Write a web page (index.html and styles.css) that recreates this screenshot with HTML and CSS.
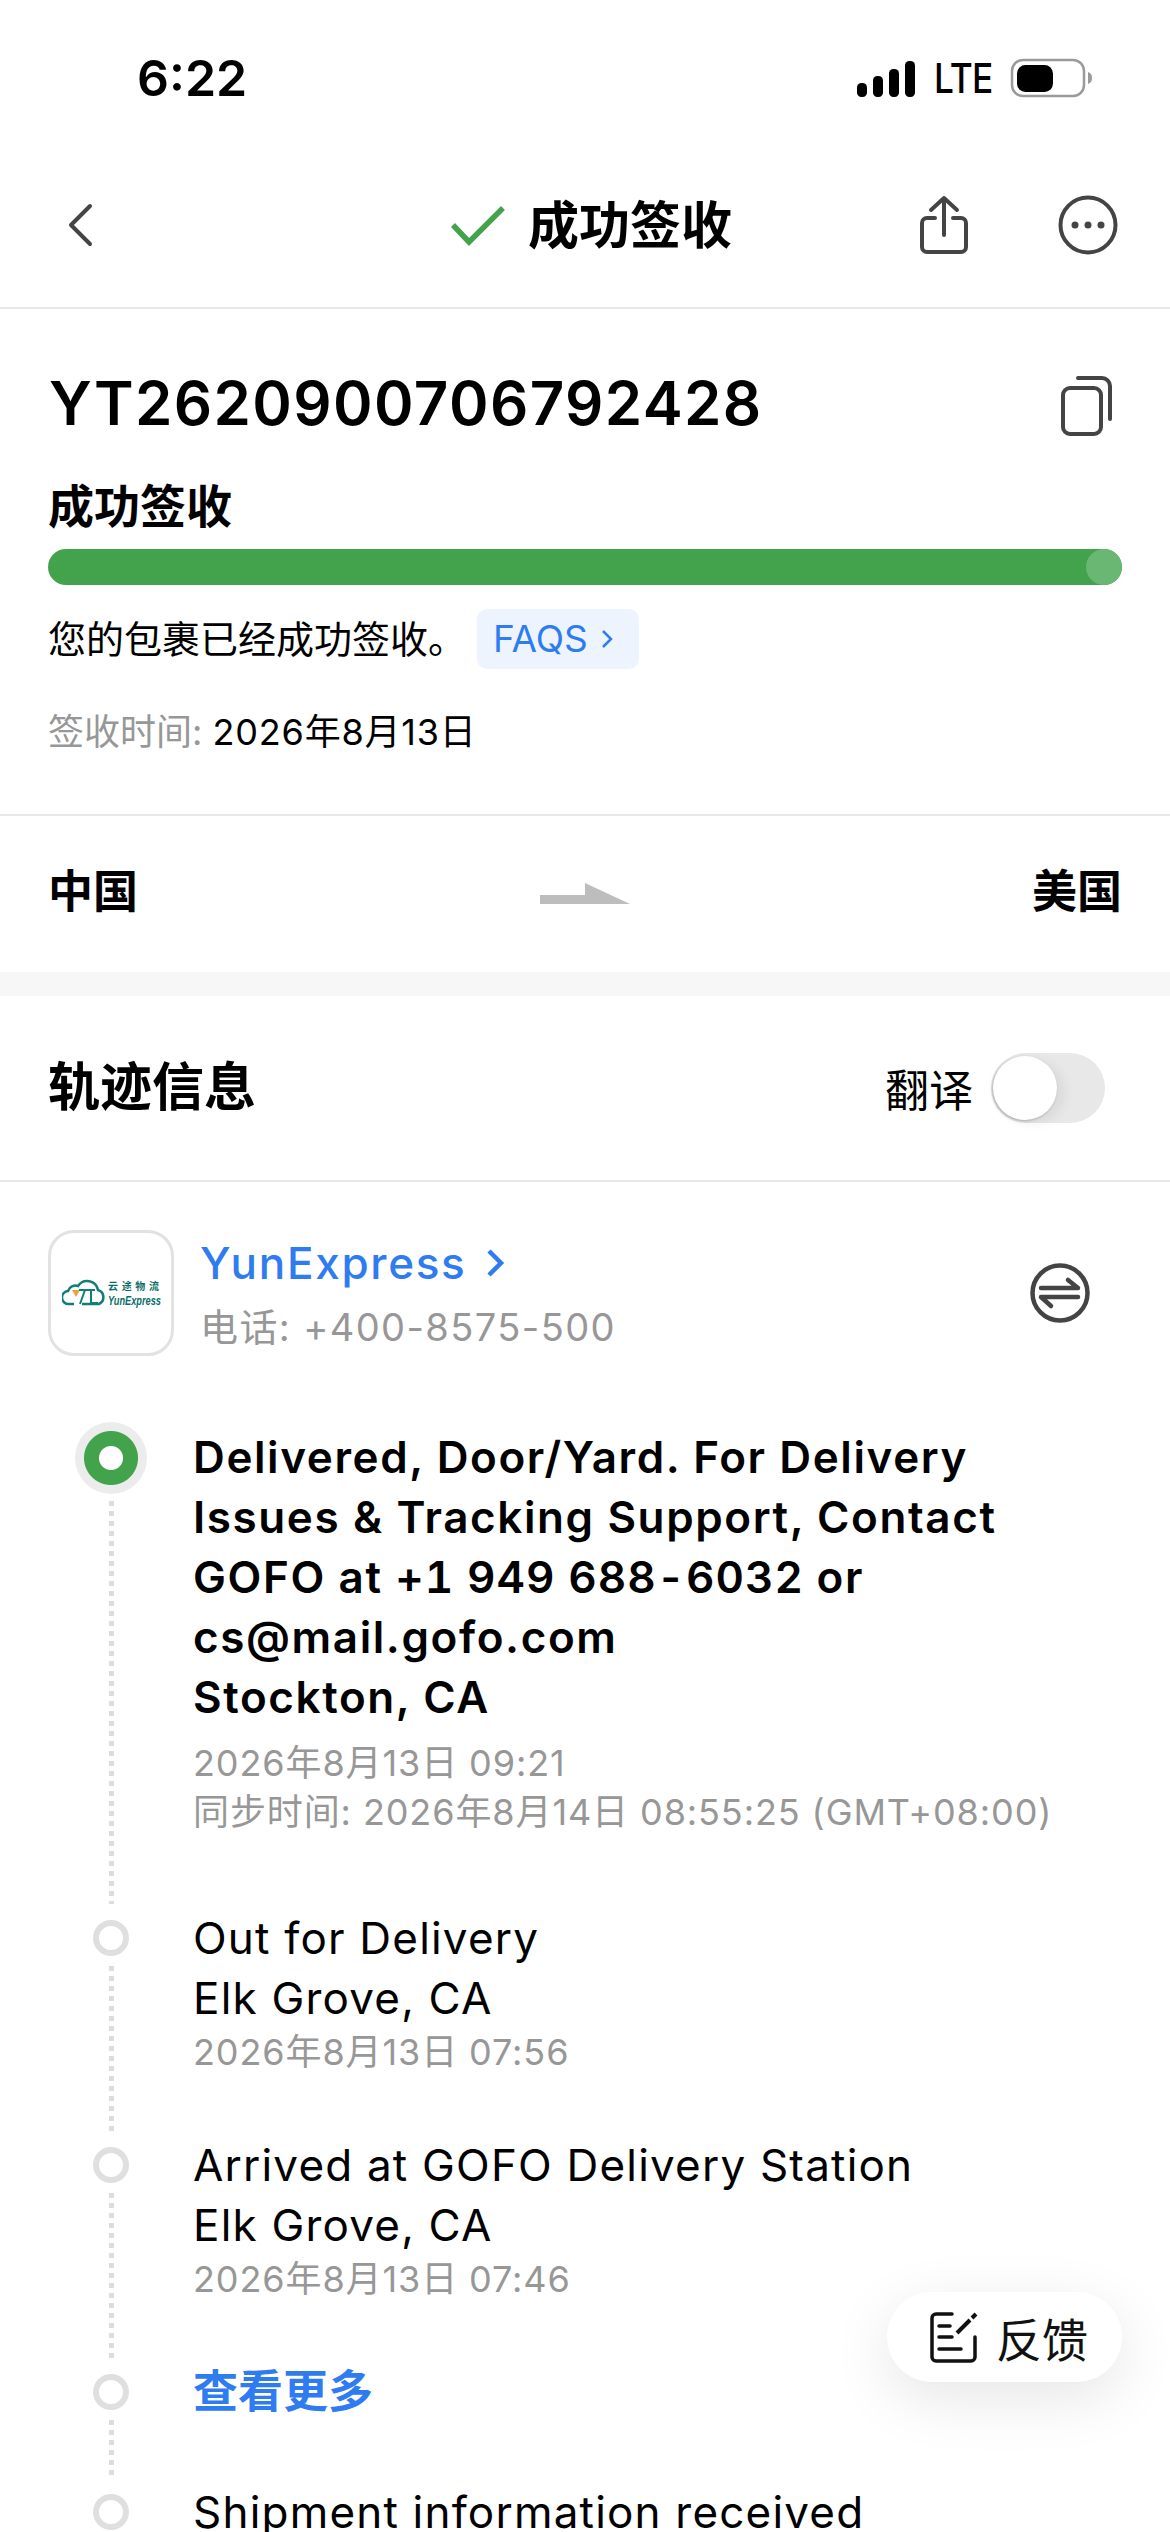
FILE: index.html
```html
<!DOCTYPE html>
<html lang="zh-CN">
<head>
<meta charset="utf-8">
<title>成功签收</title>
<link rel="stylesheet" href="styles.css">
</head>
<body>
<div class="phone">
  <header class="status">
    <span class="clock">6:22</span>
    <div class="status-right">
      <svg class="signal" width="58" height="38" viewBox="0 0 58 38"><rect x="0" y="23" width="10" height="14" rx="4.500"/><rect x="16" y="16" width="10" height="21" rx="4.500"/><rect x="32" y="9" width="10" height="28" rx="4.500"/><rect x="48" y="1" width="10" height="36" rx="4.500"/></svg>
      <span class="lte">LTE</span>
      <svg class="battery" width="84" height="40" viewBox="0 0 84 40"><rect x="2" y="2" width="72" height="36" rx="11" fill="#fff" stroke="#9a9a9a" stroke-width="2.500"/><rect x="7" y="7" width="36" height="27" rx="8.500" fill="#000"/><path d="M78 14c3 1 4 3 4 6s-1 5-4 6z" fill="#9a9a9a"/></svg>
    </div>
  </header>

  <nav class="navbar">
    <svg class="back" width="28" height="44" viewBox="0 0 28 44"><path d="M24 3 5 22 24 41" fill="none" stroke="#444" stroke-width="4" stroke-linecap="round" stroke-linejoin="round"/></svg>
    <div class="nav-title">
      <svg width="56" height="42" viewBox="0 0 56 42"><path d="M3 20 19 37 53 3" fill="none" stroke="#43a34d" stroke-width="5.500"/></svg>
      <span>成功签收</span>
    </div>
    <div class="nav-actions">
      <svg width="50" height="60" viewBox="0 0 50 60"><path d="M16 23H8a5 5 0 0 0-5 5v24a5 5 0 0 0 5 5h34a5 5 0 0 0 5-5V28a5 5 0 0 0-5-5h-8M25 40V3M12 15 25 3l13 12" fill="none" stroke="#444" stroke-width="4" stroke-linecap="round" stroke-linejoin="round"/></svg>
      <svg width="60" height="60" viewBox="0 0 60 60"><circle cx="30" cy="30" r="27.500" fill="none" stroke="#444" stroke-width="4"/><circle cx="17" cy="30" r="3.500" fill="#444"/><circle cx="30" cy="30" r="3.500" fill="#444"/><circle cx="43" cy="30" r="3.500" fill="#444"/></svg>
    </div>
  </nav>

  <section class="summary">
    <div class="number-row">
      <h1 class="number">YT2620900706792428</h1>
      <svg class="copy" width="52" height="60" viewBox="0 0 52 60"><rect x="2" y="12" width="38" height="46" rx="7" fill="none" stroke="#444" stroke-width="4"/><path d="M17 2H41a8 8 0 0 1 8 8V43" fill="none" stroke="#444" stroke-width="4" stroke-linecap="round"/></svg>
    </div>
    <h2 class="state">成功签收</h2>
    <div class="bar"><span class="bar-end"></span></div>
    <div class="note-row">
      <span class="note">您的包裹已经成功签收。</span>
      <span class="faq">FAQS<svg width="14" height="22" viewBox="0 0 14 22"><path d="M3 3l8 8-8 8" fill="none" stroke="#2f7cf0" stroke-width="2.500"/></svg></span>
    </div>
    <p class="signed"><span class="muted">签收时间:</span> <span class="signed-date">2026年8月13日</span></p>
  </section>

  <section class="route">
    <span class="route-name">中国</span>
    <svg width="90" height="22" viewBox="0 0 90 22"><path d="M0 21V12H45V0L90 21z" fill="#bdbdbd"/></svg>
    <span class="route-name">美国</span>
  </section>

  <div class="gap"></div>

  <section class="track-head">
    <h2>轨迹信息</h2>
    <div class="translate">
      <span>翻译</span>
      <span class="switch"><span class="knob"></span></span>
    </div>
  </section>

  <section class="carrier">
    <div class="logo">
      <svg width="104" height="30" viewBox="0 0 104 30">
        <path d="M12 26H7a6.500 6.500 0 0 1-1-13 8 8 0 0 1 10-5 11 11 0 0 1 20 4 7.500 7.500 0 0 1 1 14H20" fill="none" stroke="#0f7f78" stroke-width="2.500"/>
        <path d="M10 12h8l-4 7z" fill="#eaa53a"/>
        <path d="M17 12h16M23 12l-5 14M29 12v13h7" fill="none" stroke="#0f7f78" stroke-width="2"/>
        <text x="46" y="12" class="logo-cn" textLength="51">云途物流</text>
        <text x="46" y="27" class="logo-en" textLength="53" lengthAdjust="spacingAndGlyphs">YunExpress</text>
      </svg>
    </div>
    <div class="carrier-info">
      <div class="carrier-name">YunExpress<svg width="22" height="32" viewBox="0 0 22 32"><path d="M4 4l12 12L4 28" fill="none" stroke="#2f7cf0" stroke-width="4.500"/></svg></div>
      <div class="carrier-phone">电话: +400-8575-500</div>
    </div>
    <svg class="swap" width="60" height="60" viewBox="0 0 60 60"><circle cx="30" cy="30" r="27.500" fill="none" stroke="#444" stroke-width="4.500"/><path d="M11 25H48L38 17M48 34H11L21 43" fill="none" stroke="#444" stroke-width="4.500" stroke-linecap="round" stroke-linejoin="round"/></svg>
  </section>

  <ol class="timeline">
    <li class="event current">
      <span class="dot"></span>
      <div class="event-body">
        <p class="event-title">Delivered, Door/Yard. For Delivery Issues &amp; Tracking Support, Contact GOFO at <span class="tel">+1 949 688-6032</span> or cs@mail.gofo.com<br>Stockton, CA</p>
        <p class="event-time">2026年8月13日 09:21<br>同步时间: 2026年8月14日 08:55:25 (GMT+08:00)</p>
      </div>
    </li>
    <li class="event">
      <span class="dot"></span>
      <div class="event-body">
        <p class="event-title">Out for Delivery<br>Elk Grove, CA</p>
        <p class="event-time">2026年8月13日 07:56</p>
      </div>
    </li>
    <li class="event">
      <span class="dot"></span>
      <div class="event-body">
        <p class="event-title">Arrived at GOFO Delivery Station<br>Elk Grove, CA</p>
        <p class="event-time">2026年8月13日 07:46</p>
      </div>
    </li>
    <li class="event more">
      <span class="dot"></span>
      <div class="event-body"><a class="more-link">查看更多</a></div>
    </li>
    <li class="event last">
      <span class="dot"></span>
      <div class="event-body">
        <p class="event-title">Shipment information received</p>
      </div>
    </li>
  </ol>

  <button class="feedback">
    <svg width="48" height="51" viewBox="0 0 48 51"><path d="M22 2H6a4 4 0 0 0-4 4v39a4 4 0 0 0 4 4h35a4 4 0 0 0 4-4V25M9 14h11M9 25h13M9 37h22" fill="none" stroke="#111" stroke-width="3.500" stroke-linecap="round"/><path d="M27 21 40 8" fill="none" stroke="#111" stroke-width="4"/><path d="M42 6 46 2" fill="none" stroke="#111" stroke-width="4"/></svg>
    <span>反馈</span>
  </button>
</div>
</body>
</html>
```
FILE: styles.css
```css
* { box-sizing: border-box; }
html, body { margin: 0; padding: 0; }
body {
  background: #fff;
  color: #000;
  font-family: "Inter", "Noto Sans CJK SC", sans-serif;
}
h1, h2, p, ol { margin: 0; padding: 0; }
ol { list-style: none; }
svg { display: block; flex: none; }

.phone {
  position: relative;
  width: 1170px;
  height: 2532px;
  overflow: hidden;
  background: #fff;
}

.status {
  height: 150px;
  padding: 50px 76px 0 137px;
  display: flex;
  justify-content: space-between;
  align-items: flex-start;
}
.clock { font-size: 50px; font-weight: 600; line-height: 56px; font-family: "Inter", sans-serif; }
.status-right { display: flex; align-items: flex-end; gap: 19px; padding-top: 8px; height: 48px; }
.lte {
  width: 57px;
  font-size: 41px;
  font-weight: 500;
  line-height: 40px;
  letter-spacing: -1px;
  transform: scaleX(.86);
  transform-origin: left;
}

.navbar {
  height: 159px;
  padding: 0 52px 8px 66px;
  display: flex;
  align-items: center;
  justify-content: space-between;
  border-bottom: 2px solid #e8e8e8;
  position: relative;
}
.nav-title {
  position: absolute;
  left: 450px;
  top: 46px;
  display: flex;
  align-items: center;
  gap: 22px;
  font-size: 51px;
  font-weight: 700;
  line-height: 60px;
}
.nav-actions { display: flex; align-items: center; gap: 89px; }

.summary { height: 507px; padding: 0 48px; border-bottom: 2px solid #e8e8e8; }
.number-row {
  height: 159px;
  padding: 59px 9px 0 1px;
  display: flex;
  align-items: flex-start;
  justify-content: space-between;
}
.copy { margin-top: 8px; }
.number { font-size: 60px; line-height: 70px; font-weight: 600; letter-spacing: 1.400px; }
.state { font-size: 46px; line-height: 56px; font-weight: 700; margin-top: 10px; }
.bar {
  height: 36px;
  margin-top: 15px;
  background: #43a34d;
  border-radius: 18px;
  position: relative;
  overflow: hidden;
}
.bar-end {
  position: absolute;
  right: 0;
  top: 0;
  width: 36px;
  height: 36px;
  border-radius: 50%;
  background: #6ab773;
}
.note-row { display: flex; align-items: center; gap: 11px; margin-top: 24px; height: 60px; }
.note { font-size: 38px; line-height: 60px; font-weight: 400; }
.faq {
  display: flex;
  align-items: center;
  gap: 12px;
  width: 162px;
  height: 60px;
  padding-left: 16px;
  background: #edf4fe;
  border-radius: 10px;
  color: #2f7cf0;
  font-size: 37px;
  line-height: 60px;
}
.signed { font-size: 36px; line-height: 44px; margin-top: 41px; }
.signed-date { letter-spacing: .8px; }
.muted { color: #979797; }

.route {
  height: 156px;
  padding: 0 48px 0 48px;
  display: flex;
  align-items: center;
  justify-content: space-between;
}
.route-name { font-size: 45px; font-weight: 700; line-height: 60px; margin-bottom: 4px; }

.gap { height: 24px; background: #f7f7f7; }

.track-head {
  height: 186px;
  padding: 0 65px 0 48px;
  display: flex;
  align-items: center;
  justify-content: space-between;
  border-bottom: 2px solid #e8e8e8;
}
.track-head h2 { font-size: 52px; font-weight: 700; line-height: 60px; }
.translate { display: flex; align-items: center; gap: 18px; font-size: 44px; }
.switch { display: block; width: 114px; height: 70px; border-radius: 35px; background: #e8e8e8; position: relative; }
.knob {
  position: absolute;
  left: 2px;
  top: 3px;
  width: 64px;
  height: 64px;
  border-radius: 50%;
  background: #fff;
  box-shadow: -1px 1px 3px rgba(0,0,0,.25), 8px 4px 12px rgba(0,0,0,.06);
}

.carrier {
  height: 110px;
  margin-top: 56px;
  padding: 0 80px 0 48px;
  display: flex;
  align-items: center;
}
.logo {
  width: 126px;
  height: 126px;
  flex: none;
  border: 3px solid #e2e2e2;
  border-radius: 26px;
  display: flex;
  align-items: center;
  justify-content: center;
  padding-left: 6px;
}
.logo-cn { font-size: 10px; font-weight: 700; fill: #0a6e68; font-family: "Noto Sans CJK SC", sans-serif; }
.logo-en { font-size: 12px; font-weight: 700; font-style: italic; fill: #0a6e68; font-family: "Liberation Sans", sans-serif; }
.carrier-info { flex: 1; margin-left: 26px; }
.carrier-name {
  display: flex;
  align-items: center;
  gap: 18px;
  font-size: 44px;
  font-weight: 500;
  line-height: 56px;
  letter-spacing: 1.700px;
  color: #2f7cf0;
}
.carrier-phone { font-size: 38px; line-height: 50px; color: #979797; letter-spacing: 1.400px; margin-top: 11px; }

.timeline { margin-top: 79px; padding-left: 93px; }
.event { position: relative; display: flex; gap: 64px; padding-bottom: 58px; }
.event::before {
  content: "";
  position: absolute;
  left: 16px;
  top: 58px;
  bottom: 4px;
  width: 5px;
  background: repeating-linear-gradient(#dcdcdc 0 5px, transparent 5px 10px);
}
.current { padding-bottom: 71px; }
.current::before { top: 74px; }
.more { padding-bottom: 60px; }
.dot {
  flex: none;
  width: 36px;
  height: 36px;
  margin-top: 12px;
  border-radius: 50%;
  border: 6px solid #dfdfdf;
  background: #fff;
}
.current .dot {
  width: 72px;
  height: 72px;
  margin: -5px -18px 0;
  border: 0;
  background: radial-gradient(circle, #fff 0 11.500px, #43a34d 12.500px 26.500px, #ececec 27.500px);
}
.event-title { font-size: 44px; line-height: 60px; letter-spacing: 1.200px; width: 830px; }
.current .event-title { font-weight: 600; letter-spacing: 1.600px; }
.tel { font-variant-numeric: tabular-nums; letter-spacing: 1px; }
.event-time { font-size: 36px; line-height: 49px; color: #979797; letter-spacing: .9px; }
.current .event-time { margin-top: 12px; }
.more-link { display: block; font-size: 45px; font-weight: 700; line-height: 60px; color: #2f7cf0; }
.last::before { display: none; }

.feedback {
  position: absolute;
  left: 887px;
  top: 2292px;
  width: 235px;
  height: 90px;
  padding: 0 0 0 43px;
  border: 0;
  border-radius: 45px;
  background: #fff;
  box-shadow: 0 16px 60px rgba(0,0,0,.1);
  display: flex;
  align-items: center;
  gap: 18px;
  font-family: "Noto Sans CJK SC", sans-serif;
  font-size: 46px;
  color: #111;
}
```
